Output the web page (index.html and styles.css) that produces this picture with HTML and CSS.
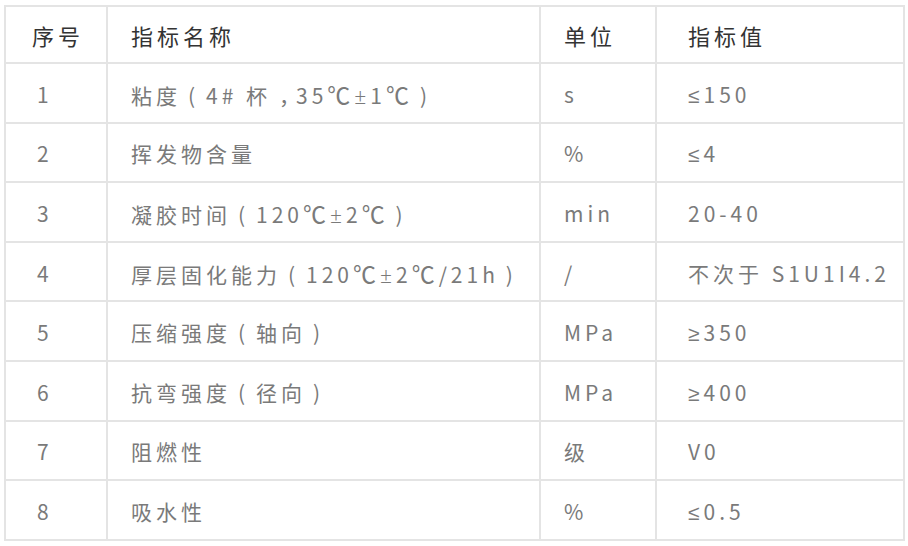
FILE: index.html
```html
<!DOCTYPE html>
<html lang="zh-CN">
<head>
<meta charset="utf-8">
<title>指标</title>
<link rel="stylesheet" href="styles.css">
</head>
<body>
<table class="spec">
  <colgroup>
    <col class="c1"><col class="c2"><col class="c3"><col class="c4">
  </colgroup>
  <thead>
    <tr><th class="n">序号</th><th>指标名称</th><th>单位</th><th class="v">指标值</th></tr>
  </thead>
  <tbody>
    <tr><td class="n">1</td><td>粘度<span class="p">(</span>4# 杯<span class="cm">，</span>35<span class="deg">℃</span><span class="op">±</span>1<span class="deg">℃</span><span class="p">)</span></td><td>s</td><td class="v"><span class="op">≤</span>150</td></tr>
    <tr><td class="n">2</td><td>挥发物含量</td><td>%</td><td class="v"><span class="op">≤</span>4</td></tr>
    <tr><td class="n">3</td><td>凝胶时间<span class="p">(</span>120<span class="deg">℃</span><span class="op">±</span>2<span class="deg">℃</span><span class="p">)</span></td><td>min</td><td class="v">20-40</td></tr>
    <tr><td class="n">4</td><td>厚层固化能力<span class="p">(</span>120<span class="deg">℃</span><span class="op">±</span>2<span class="deg">℃</span>/21h<span class="p">)</span></td><td>/</td><td class="v">不次于 S1U1I4.2</td></tr>
    <tr><td class="n">5</td><td>压缩强度<span class="p">(</span>轴向<span class="p">)</span></td><td>MPa</td><td class="v"><span class="op">≥</span>350</td></tr>
    <tr><td class="n">6</td><td>抗弯强度<span class="p">(</span>径向<span class="p">)</span></td><td>MPa</td><td class="v"><span class="op">≥</span>400</td></tr>
    <tr><td class="n">7</td><td>阻燃性</td><td>级</td><td class="v">V0</td></tr>
    <tr><td class="n">8</td><td>吸水性</td><td>%</td><td class="v"><span class="op">≤</span>0.5</td></tr>
  </tbody>
</table>
</body>
</html>
```
FILE: styles.css
```css
html, body {
  margin: 0;
  padding: 0;
  background: #ffffff;
}
body {
  padding: 5px 0 0 4px;
  font-family: "Noto Sans CJK SC", "Noto Sans", sans-serif;
}
.spec {
  border-collapse: collapse;
  table-layout: fixed;
  width: 899px;
}
.c1 { width: 102px; }
.c2 { width: 433px; }
.c3 { width: 116px; }
.c4 { width: 248px; }
.spec th, .spec td {
  border: 2px solid #e4e4e4;
  text-align: left;
  vertical-align: middle;
  padding: 2px 0 0 23px;
  white-space: nowrap;
  letter-spacing: 4px;
}
.spec th {
  height: 55px;
  font-size: 22px;
  font-weight: normal;
  color: #333333;
  padding-top: 0;
}
.spec td {
  height: 55.6px;
  font-size: 21px;
  color: #7a7a7a;
}
.spec th.n { padding-left: 26px; }
.spec td.n { padding-left: 31px; }
.spec .v { padding-left: 31px; }
.p {
  display: inline-block;
  width: 21px;
  margin-right: 4px;
  text-align: center;
  letter-spacing: 0;
}
.cm {
  margin-left: 8px;
  letter-spacing: -4px;
}
.deg {
  font-size: 23px;
  letter-spacing: 4px;
}
.op {
  font-family: "Noto Sans", "DejaVu Sans", sans-serif;
  font-weight: 300;
}
```
